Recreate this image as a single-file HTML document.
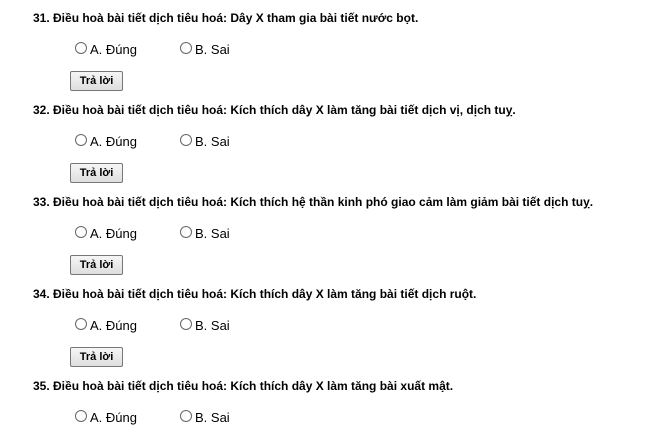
<!DOCTYPE html>
<html><head><meta charset="utf-8"><style>
body{margin:0;width:649px;height:434px;background:#fff;font-family:"Liberation Sans",Arial,sans-serif;color:#000;position:relative;overflow:hidden}
.q{position:absolute;left:33px;font-size:12px;font-weight:bold;white-space:nowrap}
.r{position:absolute;width:12px;height:12px;border:1px solid #666;border-radius:50%;box-sizing:border-box;background:#fff}
.l{position:absolute;font-size:13px;white-space:nowrap}
.b{position:absolute;left:70px;width:53px;height:20px;border:1px solid #777;border-radius:2px;box-sizing:border-box;background:linear-gradient(#f6f6f6,#dedede);font-size:11px;font-weight:bold;text-align:center;line-height:18px}
</style></head><body>
<div class="q" style="top:11px">31. Điều hoà bài tiết dịch tiêu hoá: Dây X tham gia bài tiết nước bọt.</div>
<div class="r" style="left:75px;top:42px"></div><div class="l" style="left:90px;top:42px">A. Đúng</div>
<div class="r" style="left:180px;top:42px"></div><div class="l" style="left:195px;top:42px">B. Sai</div>
<div class="b" style="top:71px">Trả lời</div>

<div class="q" style="top:103px">32. Điều hoà bài tiết dịch tiêu hoá: Kích thích dây X làm tăng bài tiết dịch vị, dịch tuỵ.</div>
<div class="r" style="left:75px;top:134px"></div><div class="l" style="left:90px;top:134px">A. Đúng</div>
<div class="r" style="left:180px;top:134px"></div><div class="l" style="left:195px;top:134px">B. Sai</div>
<div class="b" style="top:163px">Trả lời</div>

<div class="q" style="top:195px">33. Điều hoà bài tiết dịch tiêu hoá: Kích thích hệ thần kinh phó giao cảm làm giảm bài tiết dịch tuỵ.</div>
<div class="r" style="left:75px;top:226px"></div><div class="l" style="left:90px;top:226px">A. Đúng</div>
<div class="r" style="left:180px;top:226px"></div><div class="l" style="left:195px;top:226px">B. Sai</div>
<div class="b" style="top:255px">Trả lời</div>

<div class="q" style="top:287px">34. Điều hoà bài tiết dịch tiêu hoá: Kích thích dây X làm tăng bài tiết dịch ruột.</div>
<div class="r" style="left:75px;top:318px"></div><div class="l" style="left:90px;top:318px">A. Đúng</div>
<div class="r" style="left:180px;top:318px"></div><div class="l" style="left:195px;top:318px">B. Sai</div>
<div class="b" style="top:347px">Trả lời</div>

<div class="q" style="top:379px">35. Điều hoà bài tiết dịch tiêu hoá: Kích thích dây X làm tăng bài xuất mật.</div>
<div class="r" style="left:75px;top:410px"></div><div class="l" style="left:90px;top:410px">A. Đúng</div>
<div class="r" style="left:180px;top:410px"></div><div class="l" style="left:195px;top:410px">B. Sai</div>
</body></html>
